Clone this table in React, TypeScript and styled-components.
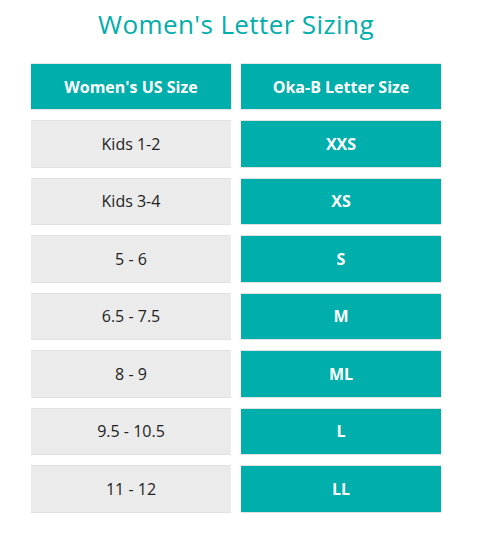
import React from 'react'
import styled, { createGlobalStyle } from 'styled-components'

const GlobalStyle = createGlobalStyle`
  body {
    margin: 0;
    background: #ffffff;
    font-family: 'Open Sans', 'Liberation Sans', sans-serif;
  }
`

const Page = styled.div`
  width: 478px;
  padding: 4px 0 0 21px;
  box-sizing: border-box;
`

const Wrapper = styled.div`
  width: 430px;
`

const Title = styled.h2`
  margin: 0 0 9px;
  text-align: center;
  color: #00aeab;
  font-family: 'Open Sans', sans-serif;
  font-weight: 400;
  font-size: 26px;
  line-height: 40px;
  letter-spacing: 0.4px;
`

const Table = styled.table`
  border-collapse: separate;
  border-spacing: 10px;
  width: 430px;
  table-layout: fixed;
`

const HeadCell = styled.th`
  height: 47px;
  padding: 0;
  background: #00aeab;
  color: #ffffff;
  font-size: 16px;
  font-weight: 700;
  text-align: center;
  border-top: 1px solid #e6e6e6;
  border-bottom: 1px solid #e6e6e6;
  box-sizing: border-box;
`

const Cell = styled.td<{ $accent?: boolean }>`
  height: 47.5px;
  padding: 0;
  box-sizing: border-box;
  text-align: center;
  font-size: 16px;
  background: ${p => (p.$accent ? '#00aeab' : '#ebebeb')};
  color: ${p => (p.$accent ? '#ffffff' : '#222222')};
  font-weight: ${p => (p.$accent ? 700 : 400)};
  border-top: 1px solid #e2e2e2;
  border-bottom: 1px solid #e2e2e2;
`

const rows = [
  ['Kids 1-2', 'XXS'],
  ['Kids 3-4', 'XS'],
  ['5 - 6', 'S'],
  ['6.5 - 7.5', 'M'],
  ['8 - 9', 'ML'],
  ['9.5 - 10.5', 'L'],
  ['11 - 12', 'LL'],
]

export default function App() {
  return (
    <Page>
      <GlobalStyle />
      <Wrapper>
        <Title>Women's Letter Sizing</Title>
        <Table>
          <thead>
            <tr>
              <HeadCell>Women's US Size</HeadCell>
              <HeadCell>Oka-B Letter Size</HeadCell>
            </tr>
          </thead>
          <tbody>
            {rows.map(([us, letter]) => (
              <tr key={us}>
                <Cell>{us}</Cell>
                <Cell $accent>{letter}</Cell>
              </tr>
            ))}
          </tbody>
        </Table>
      </Wrapper>
    </Page>
  )
}
